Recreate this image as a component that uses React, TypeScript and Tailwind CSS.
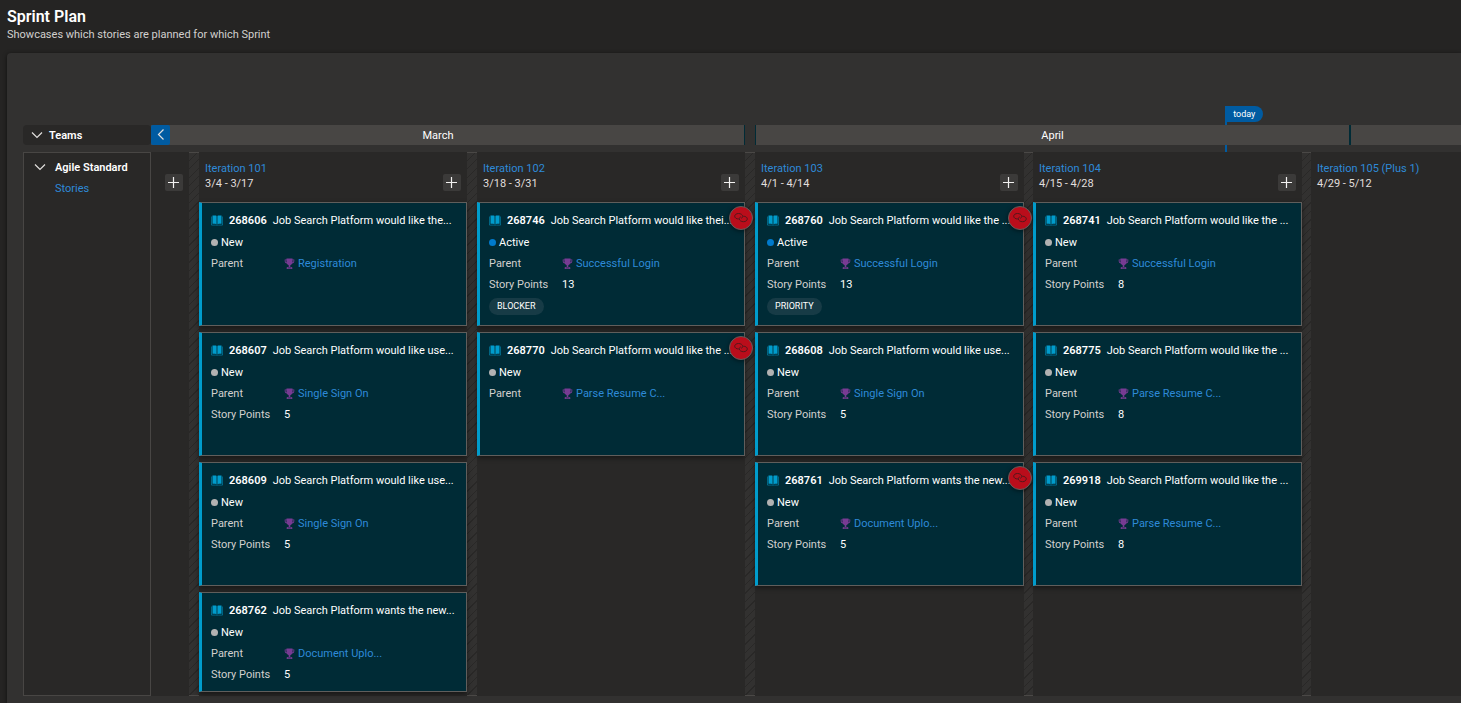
import React from 'react';

type Story = {
  id: string;
  title: string;
  state: 'New' | 'Active';
  parent: string;
  points?: number;
  tag?: string;
  linked?: boolean;
};

type Iteration = { name: string; dates: string; stories: Story[] };

const iterations: Iteration[] = [
  {
    name: 'Iteration 101',
    dates: '3/4 - 3/17',
    stories: [
      { id: '268606', title: 'Job Search Platform would like the...', state: 'New', parent: 'Registration' },
      { id: '268607', title: 'Job Search Platform would like use...', state: 'New', parent: 'Single Sign On', points: 5 },
      { id: '268609', title: 'Job Search Platform would like use...', state: 'New', parent: 'Single Sign On', points: 5 },
      { id: '268762', title: 'Job Search Platform wants the new...', state: 'New', parent: 'Document Uplo...', points: 5 },
    ],
  },
  {
    name: 'Iteration 102',
    dates: '3/18 - 3/31',
    stories: [
      { id: '268746', title: 'Job Search Platform would like thei...', state: 'Active', parent: 'Successful Login', points: 13, tag: 'BLOCKER', linked: true },
      { id: '268770', title: 'Job Search Platform would like the ...', state: 'New', parent: 'Parse Resume C...', linked: true },
    ],
  },
  {
    name: 'Iteration 103',
    dates: '4/1 - 4/14',
    stories: [
      { id: '268760', title: 'Job Search Platform would like the ...', state: 'Active', parent: 'Successful Login', points: 13, tag: 'PRIORITY', linked: true },
      { id: '268608', title: 'Job Search Platform would like use...', state: 'New', parent: 'Single Sign On', points: 5 },
      { id: '268761', title: 'Job Search Platform wants the new...', state: 'New', parent: 'Document Uplo...', points: 5, linked: true },
    ],
  },
  {
    name: 'Iteration 104',
    dates: '4/15 - 4/28',
    stories: [
      { id: '268741', title: 'Job Search Platform would like the ...', state: 'New', parent: 'Successful Login', points: 8 },
      { id: '268775', title: 'Job Search Platform would like the ...', state: 'New', parent: 'Parse Resume C...', points: 8 },
      { id: '269918', title: 'Job Search Platform would like the ...', state: 'New', parent: 'Parse Resume C...', points: 8 },
    ],
  },
];

function ChevronDown() {
  return (
    <svg className="h-3 w-3 shrink-0" viewBox="0 0 12 12" fill="none" stroke="#e1dfdd" strokeWidth="1.2" aria-hidden="true">
      <path d="M1 2.500 6 7.500 11 2.500" />
    </svg>
  );
}

function BookIcon() {
  return (
    <svg className="h-3 w-3 shrink-0" viewBox="0 0 12 12" aria-hidden="true">
      <path fill="#009ccc" d="M1.500.500h3.300q.8 0 .8.8V9.500Q5 8.800 4 8.800H1.500zM10.500.500H7.200q-.8 0-.8.8V9.500Q7 8.800 8 8.800h2.500z" />
      <path fill="none" stroke="#009ccc" strokeOpacity=".75" strokeWidth=".7" d="M.500 1.500v8.600h4.200q.9 0 1.300.5.4-.5 1.300-.5h4.200V1.500" />
    </svg>
  );
}

function TrophyIcon() {
  return (
    <svg className="h-3 w-[11px] shrink-0" viewBox="0 0 11 12" aria-hidden="true">
      <path fill="#773b93" d="M2.500.500h6v1h1.800v1.700q0 2-2 2.300Q7.600 6.800 6.300 7.200V9h1.200q.8 0 .8.800v1.200h-5.600V9.800q0-.8.8-.8h1.200V7.200Q3.400 6.800 2.700 5.500q-2-.3-2-2.300V1.500h1.800z" />
      <path fill="#002b36" d="M1.500 2.300h1v2.100q-1-.3-1-1.300zM9.500 2.300h-1v2.100q1-.3 1-1.300z" />
      <path stroke="#002b36" strokeWidth=".6" d="M3.800 9.900h3.400" />
    </svg>
  );
}

function LinkIcon() {
  return (
    <svg className="h-3 w-[14px]" viewBox="0 0 14 12" fill="none" stroke="#4a1a1c" strokeWidth=".9" aria-hidden="true">
      <path d="M4.800 7C2.300 7 .700 5.700.700 4.200S2.300 1.500 4.500 1.500s4.200 1.200 4.200 2.900c0 .9-.6 1.700-1.500 1.900" />
      <path d="M9.200 4.200c2.500 0 4.100 1.200 4.100 2.700S11.700 9.700 9.500 9.700 5.300 8.500 5.300 6.800c0-.9.600-1.700 1.500-1.900" />
    </svg>
  );
}

function AddButton({ label }: { label: string }) {
  return (
    <button type="button" aria-label={label} className="flex h-[17px] w-[18px] shrink-0 items-center justify-center rounded-xs bg-[#3b3a39]">
      <svg className="h-3 w-3" viewBox="0 0 12 12" stroke="#f3f2f1" strokeWidth="1.2" aria-hidden="true">
        <path d="M5.500 0v11M0 5.500h11" />
      </svg>
    </button>
  );
}

function Gap() {
  return (
    <div
      aria-hidden="true"
      className="border-y border-[#4a4846] bg-[repeating-linear-gradient(135deg,#323130_0px,#323130_5px,#292827_5px,#292827_6px)]"
    />
  );
}

function StoryCard({ story, compact }: { story: Story; compact: boolean }) {
  return (
    <article
      className={
        'relative border border-l-[3px] border-[#605e5c] border-l-[#009ccc] bg-[#002b36] pt-[7px] pl-[9px] leading-[21px] shadow-[0_2px_5px_rgba(0,0,0,0.45)] ' +
        (compact ? 'h-[100px]' : 'h-[124px]')
      }
    >
      <h3 className="flex items-center whitespace-nowrap text-white">
        <BookIcon />
        <span className="ml-[6px] font-semibold">{story.id}</span>
        <span className="ml-[6px] font-normal">{story.title}</span>
      </h3>
      <p className="mt-px flex items-center gap-[3px] text-white">
        <span className={'h-[7px] w-[7px] rounded-full ' + (story.state === 'Active' ? 'bg-[#007acc]' : 'bg-[#b2b2b2]')} />
        {story.state}
      </p>
      <dl className="grid grid-cols-[73px_1fr]">
        <dt className="text-[#d2d0ce]">Parent</dt>
        <dd className="flex items-center gap-[3px]">
          <TrophyIcon />
          <a href="#" className="text-[#2e8ad8]">{story.parent}</a>
        </dd>
        {story.points !== undefined && (
          <>
            <dt className="text-[#d2d0ce]">Story Points</dt>
            <dd className="text-white">{story.points}</dd>
          </>
        )}
      </dl>
      {story.tag && (
        <div className="mt-[3px] flex">
          <span className="rounded-full bg-[#173b46] px-2 text-[9px] leading-[17px] text-white">{story.tag}</span>
        </div>
      )}
      {story.linked && (
        <button
          type="button"
          aria-label="Show dependencies"
          className="absolute top-[3px] -right-[9px] z-10 flex h-6 w-6 items-center justify-center rounded-full border border-[#605e5c] bg-[#ba0d1b] shadow-[0_1px_4px_rgba(0,0,0,0.5)]"
        >
          <LinkIcon />
        </button>
      )}
    </article>
  );
}

function IterationHeading({ name, dates }: { name: string; dates: string }) {
  return (
    <div className="leading-[15px]">
      <h2>
        <a href="#" className="text-[#2e8ad8]">{name}</a>
      </h2>
      <p className="text-[#e1dfdd]">{dates}</p>
    </div>
  );
}

export default function App() {
  return (
    <div className="flex min-h-screen flex-col overflow-hidden bg-[#252423] font-['Roboto','Open_Sans',sans-serif] text-[11px] text-white">
      <header className="px-[7px] pt-[7px] pb-[11px]">
        <h1 className="text-[16px] leading-5 font-semibold">Sprint Plan</h1>
        <p className="leading-[15px] text-[#d2d0ce]">Showcases which stories are planned for which Sprint</p>
      </header>

      <main className="ml-[7px] flex grow flex-col rounded-tl bg-[#323130] pt-[72px] pb-[7px] pl-4 shadow-[0_1px_4px_rgba(0,0,0,0.6)]">
        <div className="flex h-[27px]">
          <div className="flex h-5 w-32 shrink-0 items-center gap-[6px] rounded-sm bg-[#292827] pt-[2px] pl-2 font-semibold">
            <button type="button" aria-label="Collapse all teams">
              <ChevronDown />
            </button>
            Teams
          </div>
          <div className="relative grow">
            <div className="absolute inset-y-0 left-[82%] -mt-[19px] border-l-2 border-[#005ba1]">
              <span className="block h-4 rounded-r-full bg-[#005ba1] pr-2 pl-[6px] text-[9px] leading-4">today</span>
            </div>
            <div className="relative grid h-[19px] grid-cols-[594fr_10px_595fr_111fr]">
              <div className="flex border-r border-[#002b36] bg-[#484644]">
                <button type="button" aria-label="Earlier iterations" className="flex w-[19px] items-center justify-center rounded-xs bg-[#005ba1]">
                  <svg className="h-3 w-3" viewBox="0 0 12 12" fill="none" stroke="#e1dfdd" strokeWidth="1.2" aria-hidden="true">
                    <path d="M8.500 .500 3.500 5.500 8.500 10.500" />
                  </svg>
                </button>
                <span className="grow pt-[3px] pr-[38px] text-center">March</span>
              </div>
              <div />
              <div className="border-x border-[#002b36] bg-[#484644] pt-[3px] text-center">April</div>
              <div className="border-l border-[#002b36] bg-[#484644]" />
            </div>
          </div>
        </div>

        <div className="flex grow">
          <aside className="w-32 shrink-0 border border-[#484644] bg-[#292827] px-[10px] pt-[5px]">
            <div className="flex items-center gap-[9px] leading-5 font-semibold">
              <button type="button" aria-label="Collapse Agile Standard">
                <ChevronDown />
              </button>
              <span>Agile Standard</span>
            </div>
            <a href="#" className="ml-[21px] leading-[22px] text-[#2e8ad8]">Stories</a>
          </aside>

          <div className="grid grow grid-cols-[38px_10px_268fr_10px_268fr_10px_269fr_9px_269fr_9px_150fr] bg-[#292827]">
            <div className="flex justify-end pt-[22px] pr-[6px]">
              <AddButton label="Add story before Iteration 101" />
            </div>
            <Gap />
            {iterations.map((iteration) => (
              <React.Fragment key={iteration.name}>
                <section className="flex min-w-0 flex-col">
                  <div className="flex h-[50px] justify-between pt-[9px] pr-[6px] pl-[6px]">
                    <IterationHeading name={iteration.name} dates={iteration.dates} />
                    <div className="pt-[13px]">
                      <AddButton label={'Add story to ' + iteration.name} />
                    </div>
                  </div>
                  <div className="flex flex-col gap-[6px]">
                    {iteration.stories.map((story, index) => (
                      <StoryCard key={story.id} story={story} compact={index === 3} />
                    ))}
                  </div>
                </section>
                <Gap />
              </React.Fragment>
            ))}
            <section className="pt-[9px] pl-[6px] whitespace-nowrap">
              <IterationHeading name="Iteration 105 (Plus 1)" dates="4/29 - 5/12" />
            </section>
          </div>
        </div>
      </main>
    </div>
  );
}
